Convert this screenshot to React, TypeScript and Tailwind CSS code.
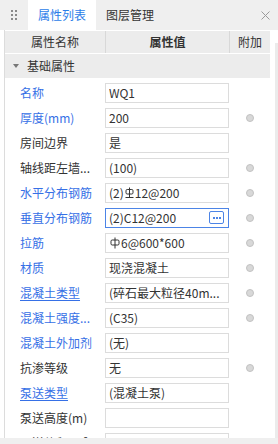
import React from "react";

type Row = {
  label: string;
  value: React.ReactNode;
  blue?: boolean;
  underline?: boolean;
  dot?: boolean;
  focus?: boolean;
};

// 三级钢符号
function Hrb400() {
  return (
    <svg width="9" height="12" viewBox="0 0 9 12" className="inline-block mx-[1px] -mt-[2px] align-middle">
      <rect x="1" y="2.5" width="7" height="4.5" rx="1.2" fill="none" stroke="#333" strokeWidth="1" />
      <line x1="4.5" y1="0.5" x2="4.5" y2="10" stroke="#333" strokeWidth="1" />
      <line x1="0.5" y1="10.5" x2="8.5" y2="10.5" stroke="#333" strokeWidth="1" />
    </svg>
  );
}

// 一级钢符号
function Hpb300() {
  return (
    <svg width="10" height="12" viewBox="0 0 10 12" className="inline-block mx-[1px] -mt-[2px] align-middle">
      <rect x="1" y="3" width="8" height="5" rx="1.2" fill="none" stroke="#333" strokeWidth="1" />
      <line x1="5" y1="0.5" x2="5" y2="11.5" stroke="#333" strokeWidth="1" />
    </svg>
  );
}

const rows: Row[] = [
  { label: "名称", value: "WQ1", blue: true },
  { label: "厚度(mm)", value: "200", blue: true, dot: true },
  { label: "房间边界", value: "是" },
  { label: "轴线距左墙...", value: "(100)", dot: true },
  { label: "水平分布钢筋", value: <>(2)<Hrb400 />12@200</>, blue: true, dot: true },
  { label: "垂直分布钢筋", value: "(2)C12@200", blue: true, dot: true, focus: true },
  { label: "拉筋", value: <><Hpb300 />6@600*600</>, blue: true, dot: true },
  { label: "材质", value: "现浇混凝土", blue: true, dot: true },
  { label: "混凝土类型", value: "(碎石最大粒径40m...", blue: true, underline: true, dot: true },
  { label: "混凝土强度...", value: "(C35)", blue: true, dot: true },
  { label: "混凝土外加剂", value: "(无)", blue: true },
  { label: "抗渗等级", value: "无", dot: true },
  { label: "泵送类型", value: "(混凝土泵)", blue: true, underline: true },
  { label: "泵送高度(m)", value: "" },
  { label: "泵送体积(m³)", value: "" },
];

export default function App() {
  return (
    <div className="w-[278px] h-[444px] bg-white flex flex-col overflow-hidden text-[12px] text-[#333] font-['Noto_Sans_CJK_SC',sans-serif]">
      {/* Tabs */}
      <div className="h-[30px] shrink-0 bg-[#efefef] flex items-stretch">
        <div className="w-[28px] flex items-center justify-center">
          <div className="grid grid-cols-2 gap-x-[2px] gap-y-[2px]">
            {[0, 1, 2, 3, 4, 5].map((i) => (
              <span key={i} className="w-[2px] h-[2px] bg-[#8a8a8a]" />
            ))}
          </div>
        </div>
        <div className="w-[68px] bg-white text-[#2b7de9] flex items-center justify-center">
          属性列表
        </div>
        <div className="pl-[10px] flex items-center text-[#333]">图层管理</div>
        <div className="flex-1" />
        <div className="w-[24px] flex items-center justify-center pr-[2px]">
          <svg width="9" height="9" viewBox="0 0 9 9">
            <path d="M0.5 0.5 L8.5 8.5 M8.5 0.5 L0.5 8.5" stroke="#9a9a9a" strokeWidth="1" />
          </svg>
        </div>
      </div>

      {/* Body */}
      <div className="flex-1 flex min-h-0">
        <div className="w-[4px]" />
        <div className="w-[266px] border-l border-[#dcdcdc] flex flex-col pt-[1px] overflow-hidden">
          {/* Header */}
          <div className="h-[22px] shrink-0 bg-[#ececec] flex">
            <div className="w-[100px] flex items-center justify-center">属性名称</div>
            <div className="w-[124px] border-l border-[#d8d8d8] flex items-center justify-center font-semibold">
              属性值
            </div>
            <div className="flex-1 border-l border-[#d8d8d8] flex items-center justify-center">附加</div>
          </div>

          {/* Group */}
          <div className="h-[24px] shrink-0 mt-[1px] bg-[#ececec] flex items-center pl-[8px]">
            <svg width="6" height="4" viewBox="0 0 6 4" className="mr-[8px]">
              <path d="M0 0 L6 0 L3 4 Z" fill="#777" />
            </svg>
            <span>基础属性</span>
          </div>

          {/* Rows */}
          <div className="pt-[2px] flex flex-col">
            {rows.map((r, i) => (
              <div key={i} className="h-[25px] shrink-0 flex items-center">
                <div
                  className={`w-[100px] pl-[15px] whitespace-nowrap overflow-hidden ${
                    r.blue ? "text-[#3670e6]" : "text-[#333]"
                  } ${r.underline ? "underline underline-offset-2" : ""}`}
                >
                  {r.label}
                </div>
                <div
                  className={`w-[124px] h-[20px] bg-white border flex items-center pl-[3px] pr-[4px] whitespace-nowrap overflow-hidden ${
                    r.focus ? "border-[#4c84e6]" : "border-[#dcdcdc]"
                  }`}
                >
                  <span className="flex-1 overflow-hidden">{r.value}</span>
                  {r.focus && (
                    <span className="w-[15px] h-[13px] rounded-[2px] border border-[#4c84e6] flex items-center justify-center gap-[1px]">
                      <span className="w-[2px] h-[2px] bg-[#4c84e6]" />
                      <span className="w-[2px] h-[2px] bg-[#4c84e6]" />
                      <span className="w-[2px] h-[2px] bg-[#4c84e6]" />
                    </span>
                  )}
                </div>
                <div className="flex-1 flex items-center justify-center">
                  {r.dot && (
                    <span className="w-[8px] h-[8px] rounded-full bg-[#d8d8d8] border border-[#c2c2c2]" />
                  )}
                </div>
              </div>
            ))}
          </div>
        </div>
        <div className="w-[5px]" />
        <div className="w-[3px] mt-[13px] bg-[#ebebeb]" />
      </div>

      {/* Bottom bar */}
      <div className="h-[6px] shrink-0 bg-[#efefef]" />
    </div>
  );
}
